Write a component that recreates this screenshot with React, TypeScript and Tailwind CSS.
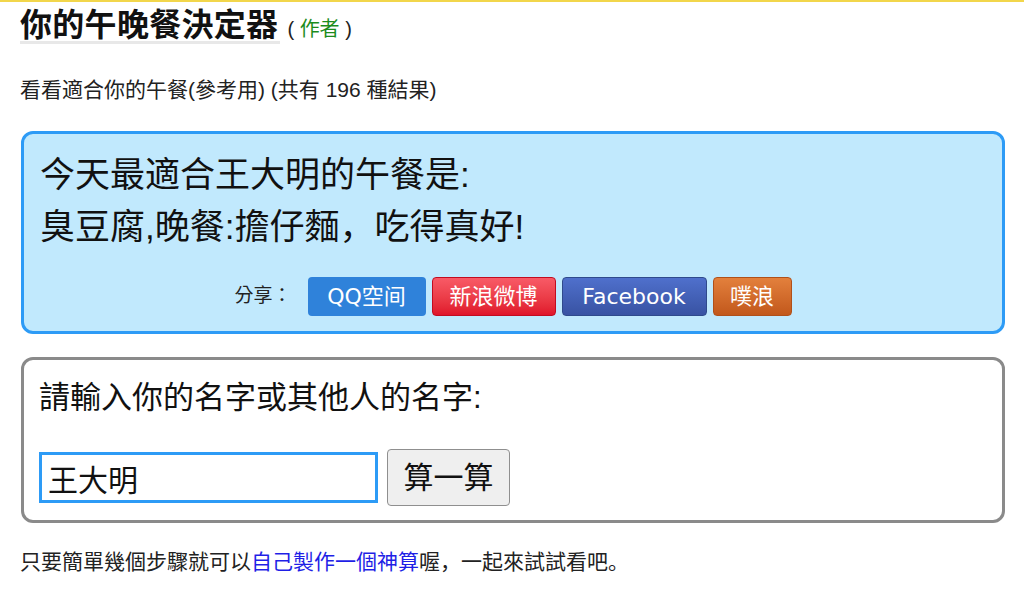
import React from "react";

const FONT = '"Liberation Sans", "Noto Sans CJK SC", sans-serif';
const TC = '"Liberation Sans", "Noto Sans CJK TC", sans-serif';
const BTN_FONT = '"DejaVu Sans", "Noto Sans CJK TC", sans-serif';

export default function App() {
  return (
    <div className="min-h-[597px] bg-white text-[#1a1a1a]" style={{ fontFamily: FONT }}>
      <div className="h-[2px] bg-[#f2d64b]" />
      <div className="pl-[20px] pr-[19px]">
        <div className="mt-[7px] flex items-baseline">
          <h1
            className="inline-block border-b-[3px] border-[#e8e8e8] pr-[2px] text-[32px] font-bold leading-[32px] tracking-[0.3px] text-[#111]"
            style={{ fontFamily: TC }}
          >
            你的午晚餐決定器
          </h1>
          <span className="ml-[7px] text-[20px] text-[#222]">
            ( <span className="text-[#1c8c1c]">作者</span> )
          </span>
        </div>

        <p className="mt-[31px] text-[21px] leading-[30px] text-[#222]">
          看看適合你的午餐(參考用) (共有 196 種結果)
        </p>

        <div className="ml-[1px] mt-[26px] rounded-[12px] border-[3px] border-[#2d9bf6] bg-[#c1e9fd] pl-[16px] pr-[16px] pt-[15px] pb-[15px]">
          <p className="text-[35px] leading-[52px] text-[#111]">今天最適合王大明的午餐是:</p>
          <p className="text-[35px] leading-[52px] text-[#111]">臭豆腐,晚餐:擔仔麵，吃得真好!</p>
          <div className="mt-[24px] flex items-center justify-center">
            <span className="mr-[16px] text-[19px] text-[#222]" style={{ fontFamily: TC }}>
              分享：
            </span>
            <div className="flex gap-[6px]" style={{ fontFamily: BTN_FONT }}>
              <div className="flex h-[39px] w-[118px] items-center justify-center rounded-[4px] bg-[#2f82da] text-[22px] text-white">
                QQ空间
              </div>
              <div className="flex h-[39px] w-[124px] items-center justify-center rounded-[4px] border border-[#c20c20] bg-gradient-to-b from-[#f85a66] to-[#e0132a] text-[22px] text-white">
                新浪微博
              </div>
              <div className="flex h-[39px] w-[145px] items-center justify-center rounded-[4px] border border-[#2f4a8c] bg-gradient-to-b from-[#4f70cc] to-[#3953a3] text-[22px] text-white">
                Facebook
              </div>
              <div className="flex h-[39px] w-[79px] items-center justify-center rounded-[4px] border border-[#b0501a] bg-gradient-to-b from-[#e3803c] to-[#c2581b] text-[22px] text-white">
                噗浪
              </div>
            </div>
          </div>
        </div>

        <div className="ml-[1px] mt-[23px] rounded-[12px] border-[3px] border-[#8a8a8a] bg-white pl-[15px] pr-[15px] pt-[15px] pb-[14px]">
          <p className="text-[31px] leading-[45px] text-[#111]">請輸入你的名字或其他人的名字:</p>
          <div className="mt-[29px] flex items-center">
            <input
              defaultValue="王大明"
              className="h-[51px] w-[339px] border-[3px] border-[#2d9bf6] bg-white pl-[6px] text-[30px] text-[#111] outline-none"
              style={{ fontFamily: FONT }}
            />
            <button
              className="ml-[9px] h-[57px] w-[123px] rounded-[4px] border border-[#8f8f8f] bg-[#efefef] text-[30px] text-[#111]"
              style={{ fontFamily: FONT }}
            >
              算一算
            </button>
          </div>
        </div>

        <p className="mt-[24px] text-[21px] leading-[30px] text-[#222]">
          只要簡單幾個步驟就可以<span className="text-[#1f1fe6]">自己製作一個神算</span>喔，一起來試試看吧。
        </p>
      </div>
    </div>
  );
}
